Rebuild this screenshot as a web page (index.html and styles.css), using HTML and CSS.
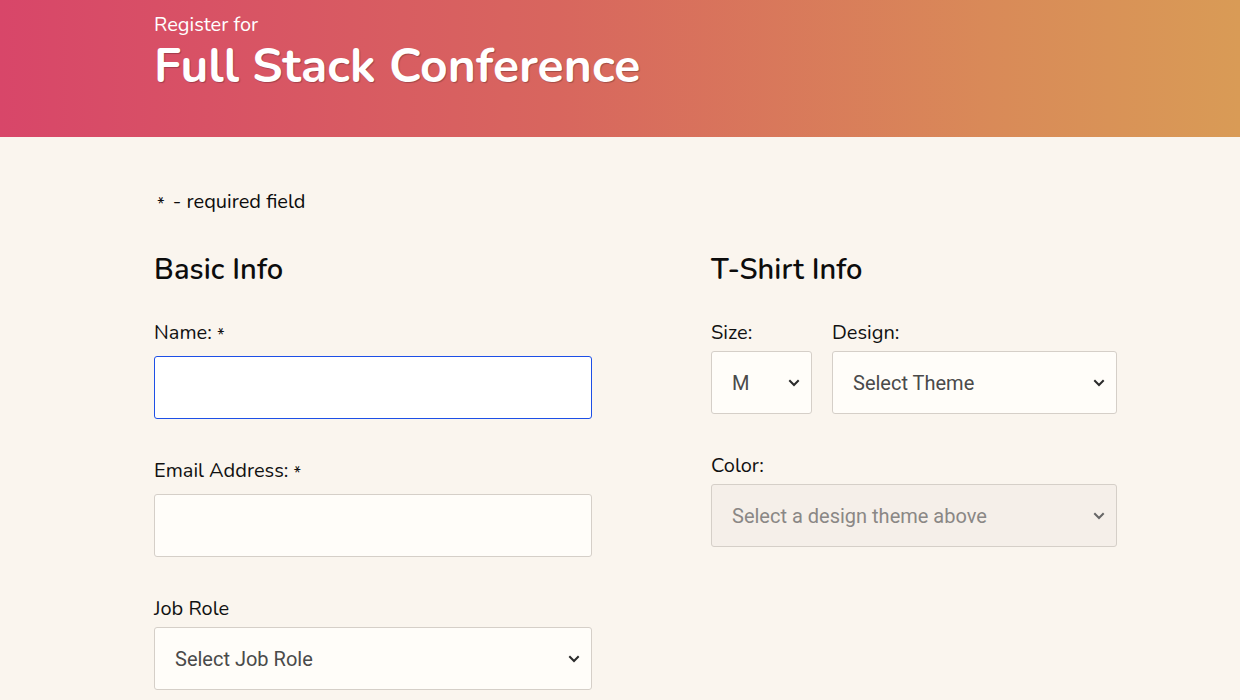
FILE: index.html
```html
<!DOCTYPE html>
<html lang="en">
<head>
<meta charset="utf-8">
<title>Register for Full Stack Conference</title>
<link rel="stylesheet" href="styles.css">
</head>
<body>
<header class="hero">
  <div class="wrap">
    <p class="hero-sub">Register for</p>
    <h1 class="hero-title">Full Stack Conference</h1>
  </div>
</header>
<main class="wrap main">
  <p class="note"><span class="ast">*</span> - required field</p>
  <div class="cols">
    <section class="col col-left">
      <h2 class="sec-title">Basic Info</h2>
      <div class="field">
        <label class="label">Name: <span class="ast">*</span></label>
        <div class="input focused"></div>
      </div>
      <div class="field">
        <label class="label">Email Address: <span class="ast">*</span></label>
        <div class="input"></div>
      </div>
      <div class="field field-tight">
        <label class="label">Job Role</label>
        <div class="select"><span class="sel-text">Select Job Role</span>
          <svg class="chev" viewBox="0 0 12 8" width="12" height="8"><path d="M1.3 1.3 L6 6 L10.7 1.3" fill="none" stroke="#2b2b2b" stroke-width="2"/></svg>
        </div>
      </div>
    </section>
    <section class="col col-right">
      <h2 class="sec-title">T-Shirt Info</h2>
      <div class="row">
        <div class="field field-tight size">
          <label class="label">Size:</label>
          <div class="select"><span class="sel-text">M</span>
            <svg class="chev" viewBox="0 0 12 8" width="12" height="8"><path d="M1.3 1.3 L6 6 L10.7 1.3" fill="none" stroke="#2b2b2b" stroke-width="2"/></svg>
          </div>
        </div>
        <div class="field field-tight design">
          <label class="label">Design:</label>
          <div class="select"><span class="sel-text">Select Theme</span>
            <svg class="chev" viewBox="0 0 12 8" width="12" height="8"><path d="M1.3 1.3 L6 6 L10.7 1.3" fill="none" stroke="#2b2b2b" stroke-width="2"/></svg>
          </div>
        </div>
      </div>
      <div class="field field-tight">
        <label class="label">Color:</label>
        <div class="select disabled"><span class="sel-text">Select a design theme above</span>
          <svg class="chev" viewBox="0 0 12 8" width="12" height="8"><path d="M1.3 1.3 L6 6 L10.7 1.3" fill="none" stroke="#666" stroke-width="2"/></svg>
        </div>
      </div>
    </section>
  </div>
</main>
</body>
</html>
```
FILE: styles.css
```css
* { box-sizing: border-box; }
html, body { margin: 0; padding: 0; }
body {
  background: #faf5ee;
  font-family: "Nunito", "Lato", "Open Sans", sans-serif;
  color: #0c0c0c;
  overflow: hidden;
}
.wrap { padding-left: 154px; }
.hero {
  height: 137px;
  background: linear-gradient(90deg, #d84669 0%, #d8665e 45%, #d98a58 80%, #d99b56 100%);
  color: #fff;
}
.hero-sub {
  margin: 0;
  padding-top: 14px;
  font-size: 20px;
  line-height: 22px;
  font-weight: 400;
}
.hero-title {
  margin: 0;
  padding-top: 1px;
  font-size: 48px;
  line-height: 58px;
  font-weight: 700;
  letter-spacing: 0.1px;
  text-shadow: 1px 1px 1px rgba(0,0,0,0.25);
}
.main { padding-top: 51px; }
.note {
  margin: 0;
  font-size: 20px;
  line-height: 27px;
  height: 27px;
  font-weight: 400;
}
.note .ast { margin-right: 3px; margin-left: 3px; }
.ast {
  font-size: 17px;
  line-height: 0;
  vertical-align: -2px;
  font-weight: 400;
}
.cols {
  display: flex;
  gap: 119px;
  margin-top: 38px;
}
.col-left { width: 438px; }
.col-right { width: 406px; }
.sec-title {
  margin: 0 0 32px;
  font-size: 29px;
  line-height: 34px;
  font-weight: 600;
  letter-spacing: 0.1px;
}
.label {
  display: block;
  font-size: 20px;
  line-height: 27px;
  height: 27px;
  margin-bottom: 10px;
  font-weight: 400;
  color: #111;
}
.field { margin-bottom: 38px; }
.field-tight .label { margin-bottom: 5px; }
.input, .select {
  height: 63px;
  border: 1px solid #d5cfc8;
  border-radius: 3px;
  background: #fffdf9;
}
.input.focused { border-color: #1d4fe6; background: #ffffff; }
.select {
  display: flex;
  align-items: center;
  justify-content: space-between;
  padding: 0 11px 0 20px;
  font-family: "Roboto", "Liberation Sans", sans-serif;
  font-size: 20px;
  font-weight: 400;
  color: #4a4a4a;
}
.select.disabled { background: #f5efe9; color: #8a8785; }
.chev { flex: none; }
.row { display: flex; gap: 20px; }
.size { width: 101px; }
.design { width: 285px; }
```
